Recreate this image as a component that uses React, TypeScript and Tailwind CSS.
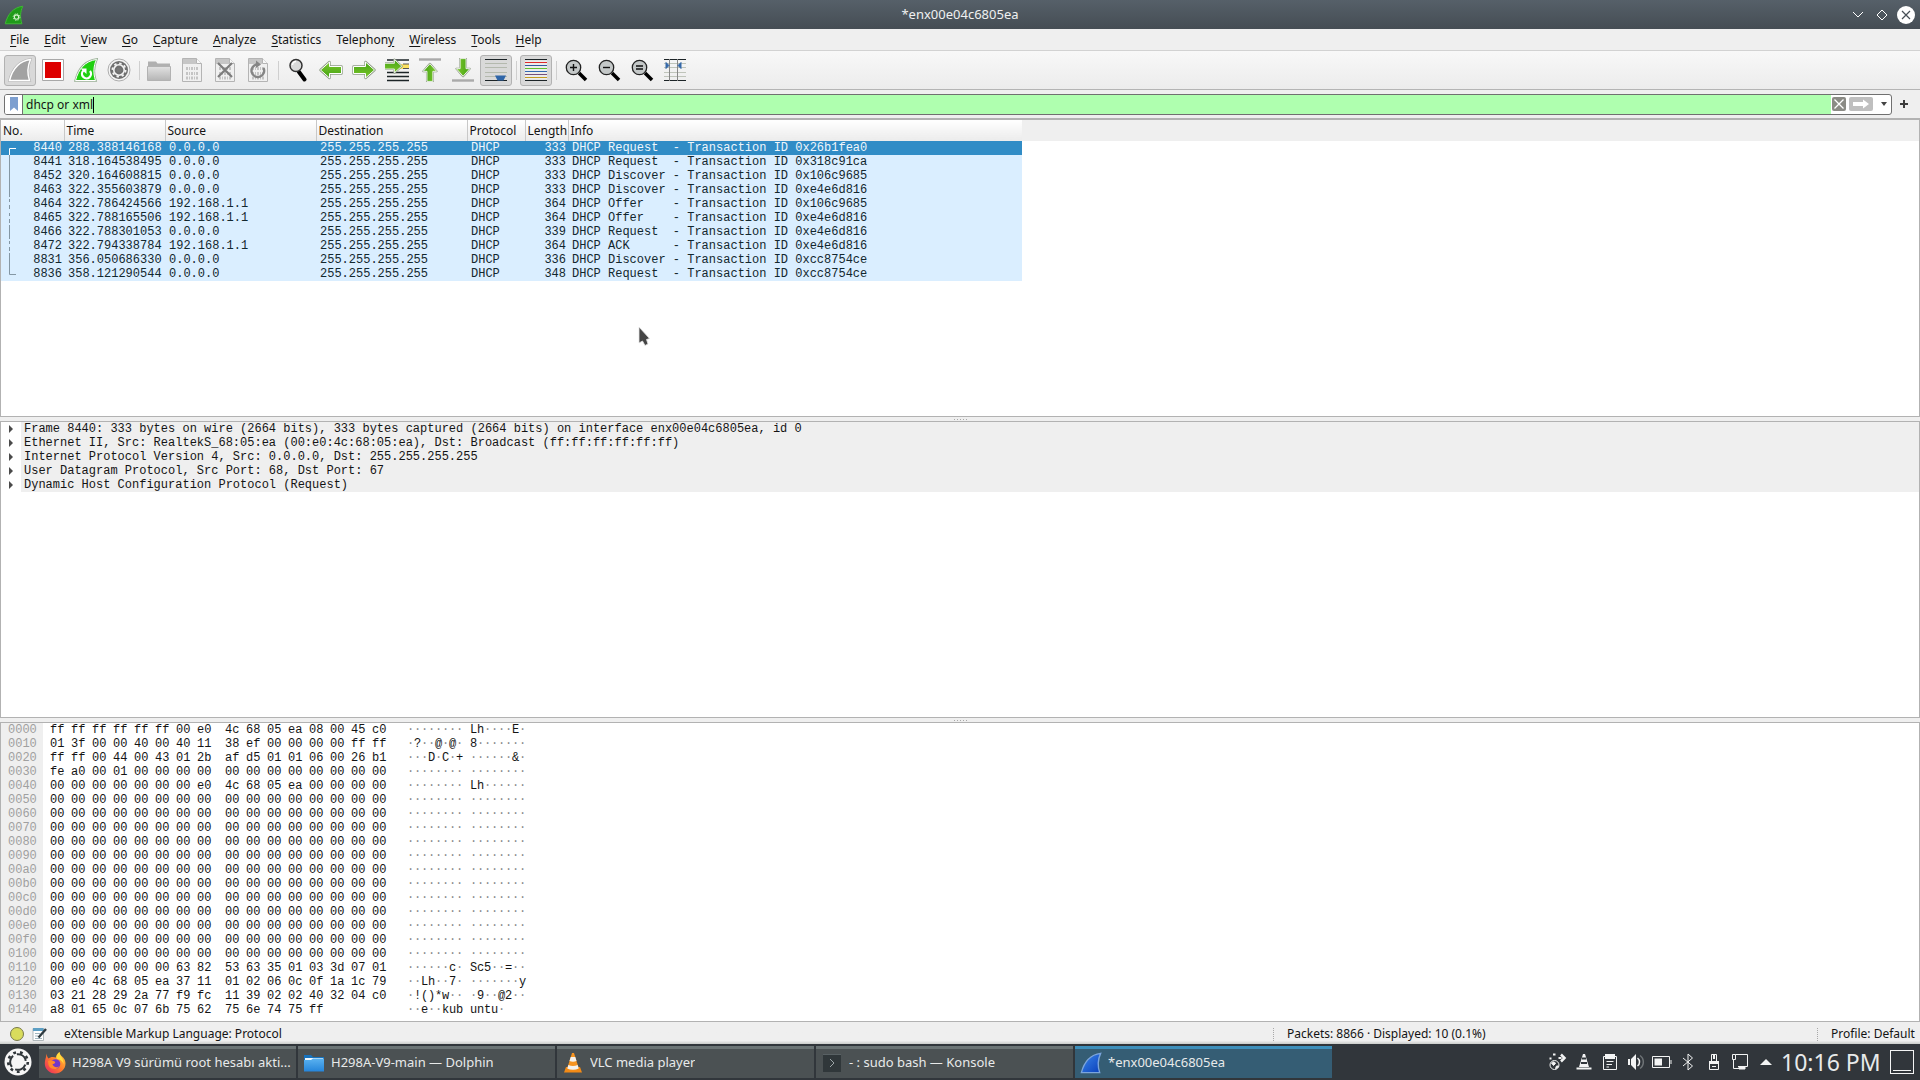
import { useState, type ReactNode } from "react";

const MENUS = ["File", "Edit", "View", "Go", "Capture", "Analyze", "Statistics", "Telephony", "Wireless", "Tools", "Help"];
// menus whose mnemonic is not the first letter
const MNEMONICS: Record<string, number> = { Telephony: 8 };

type Trace = "start" | "line" | "dash" | "end";
type Packet = { no: number; time: string; src: string; proto: string; len: number; info: string; trace: Trace };

const PACKETS: Packet[] = [
  { no: 8440, time: "288.388146168", src: "0.0.0.0", proto: "DHCP", len: 333, info: "DHCP Request  - Transaction ID 0x26b1fea0", trace: "start" },
  { no: 8441, time: "318.164538495", src: "0.0.0.0", proto: "DHCP", len: 333, info: "DHCP Request  - Transaction ID 0x318c91ca", trace: "line" },
  { no: 8452, time: "320.164608815", src: "0.0.0.0", proto: "DHCP", len: 333, info: "DHCP Discover - Transaction ID 0x106c9685", trace: "line" },
  { no: 8463, time: "322.355603879", src: "0.0.0.0", proto: "DHCP", len: 333, info: "DHCP Discover - Transaction ID 0xe4e6d816", trace: "line" },
  { no: 8464, time: "322.786424566", src: "192.168.1.1", proto: "DHCP", len: 364, info: "DHCP Offer    - Transaction ID 0x106c9685", trace: "dash" },
  { no: 8465, time: "322.788165506", src: "192.168.1.1", proto: "DHCP", len: 364, info: "DHCP Offer    - Transaction ID 0xe4e6d816", trace: "dash" },
  { no: 8466, time: "322.788301053", src: "0.0.0.0", proto: "DHCP", len: 339, info: "DHCP Request  - Transaction ID 0xe4e6d816", trace: "line" },
  { no: 8472, time: "322.794338784", src: "192.168.1.1", proto: "DHCP", len: 364, info: "DHCP ACK      - Transaction ID 0xe4e6d816", trace: "dash" },
  { no: 8831, time: "356.050686330", src: "0.0.0.0", proto: "DHCP", len: 336, info: "DHCP Discover - Transaction ID 0xcc8754ce", trace: "line" },
  { no: 8836, time: "358.121290544", src: "0.0.0.0", proto: "DHCP", len: 348, info: "DHCP Request  - Transaction ID 0xcc8754ce", trace: "end" },
];

const DETAILS = [
  "Frame 8440: 333 bytes on wire (2664 bits), 333 bytes captured (2664 bits) on interface enx00e04c6805ea, id 0",
  "Ethernet II, Src: RealtekS_68:05:ea (00:e0:4c:68:05:ea), Dst: Broadcast (ff:ff:ff:ff:ff:ff)",
  "Internet Protocol Version 4, Src: 0.0.0.0, Dst: 255.255.255.255",
  "User Datagram Protocol, Src Port: 68, Dst Port: 67",
  "Dynamic Host Configuration Protocol (Request)",
];

const ZERO_ROW = "00 00 00 00 00 00 00 00 00 00 00 00 00 00 00 00";
const HEX_ROWS: string[] = [
  "ff ff ff ff ff ff 00 e0 4c 68 05 ea 08 00 45 c0",
  "01 3f 00 00 40 00 40 11 38 ef 00 00 00 00 ff ff",
  "ff ff 00 44 00 43 01 2b af d5 01 01 06 00 26 b1",
  "fe a0 00 01 00 00 00 00 00 00 00 00 00 00 00 00",
  "00 00 00 00 00 00 00 e0 4c 68 05 ea 00 00 00 00",
  ...Array<string>(12).fill(ZERO_ROW),
  "00 00 00 00 00 00 63 82 53 63 35 01 03 3d 07 01",
  "00 e0 4c 68 05 ea 37 11 01 02 06 0c 0f 1a 1c 79",
  "03 21 28 29 2a 77 f9 fc 11 39 02 02 40 32 04 c0",
  "a8 01 65 0c 07 6b 75 62 75 6e 74 75 ff",
];

function Ascii({ bytes }: { bytes: string[] }) {
  return (
    <>
      {bytes.map((b, i) => {
        const code = parseInt(b, 16);
        const printable = code >= 0x20 && code < 0x7f;
        return (
          <span key={i} className={printable ? "inline-block w-[7px]" : "inline-block w-[7px] text-[#8c8c8c]"}>
            {printable ? String.fromCharCode(code) : "·"}
          </span>
        );
      })}
    </>
  );
}

function HexDump() {
  return (
    <div className="relative flex-1 overflow-hidden bg-white">
      <div className="absolute inset-y-0 left-0 w-[42px] bg-[#efefef]" />
      <table className="relative table-fixed border-collapse font-['Liberation_Mono',monospace] text-[12px] leading-[14px] text-[#141414]">
        <tbody>
          {HEX_ROWS.map((row, r) => {
            const bytes = row.split(" ");
            return (
              <tr key={r} className="h-[14px]">
                <td className="w-[49px] p-0 pl-[7px] text-[#a0a0a0]">{(r * 16).toString(16).padStart(4, "0")}</td>
                {Array.from({ length: 16 }, (_, i) => (
                  <td key={i} className={i === 7 ? "w-7 min-w-7 p-0" : "w-[21px] min-w-[21px] p-0"}>
                    {bytes[i] ?? ""}
                  </td>
                ))}
                <td className="w-[77px] p-0 pl-[14px] whitespace-pre">
                  <Ascii bytes={bytes.slice(0, 8)} />
                </td>
                <td className="w-14 p-0 whitespace-pre">
                  <Ascii bytes={bytes.slice(8)} />
                </td>
              </tr>
            );
          })}
        </tbody>
      </table>
    </div>
  );
}

const TRACE_PATHS: Record<Trace, string> = {
  start: "M15 7.5H8.5V14",
  line: "M8.5 0V14",
  dash: "M8.5 2V5M8.5 8V12",
  end: "M8.5 0V7.5H15",
};

function PacketList() {
  const [selected, setSelected] = useState(8440);
  const cell = "p-0 pl-1";
  const head = "border-r border-[#c8c8c8] bg-linear-to-b from-white to-[#ebebeb] p-0 pl-0.5 text-left font-normal";
  return (
    <div className="flex-1 overflow-hidden bg-white">
      <table className="w-full table-fixed border-collapse">
        <colgroup>
          <col className="w-[63px]" />
          <col className="w-[101px]" />
          <col className="w-[151px]" />
          <col className="w-[151px]" />
          <col className="w-[58px]" />
          <col className="w-[43px]" />
          <col className="w-[454px]" />
          <col />
        </colgroup>
        <thead>
          <tr className="h-[21px] text-[12px] leading-[18px] text-[#141414]">
            <th className={head}>No.</th>
            <th className={head}>Time</th>
            <th className={head}>Source</th>
            <th className={head}>Destination</th>
            <th className={head}>Protocol</th>
            <th className={head}>Length</th>
            <th className="bg-linear-to-b from-white to-[#ebebeb] p-0 pl-0.5 text-left font-normal">Info</th>
            <td className="bg-[#efefef] p-0" />
          </tr>
        </thead>
        <tbody className="font-['Liberation_Mono',monospace] text-[12px] leading-[14px] whitespace-pre">
          {PACKETS.map((p) => {
            const active = p.no === selected;
            return (
              <tr
                key={p.no}
                onClick={() => setSelected(p.no)}
                className={active ? "h-[14px] bg-[#308cc6] text-[#eff6fb]" : "h-[14px] bg-[#daeeff] text-[#12272e]"}
              >
                <td className="p-0 pr-0.5">
                  <div className="flex h-[14px] justify-between">
                    <svg width="16" height="14" className={active ? "text-white" : "text-[#8497a4]"}>
                      <path d={TRACE_PATHS[p.trace]} fill="none" stroke="currentColor" />
                    </svg>
                    <span>{p.no}</span>
                  </div>
                </td>
                <td className={cell}>{p.time}</td>
                <td className={cell}>{p.src}</td>
                <td className={cell}>255.255.255.255</td>
                <td className={cell}>{p.proto}</td>
                <td className="p-0 pr-0.5 text-right">{p.len}</td>
                <td className={cell}>{p.info}</td>
                <td className="bg-white p-0" />
              </tr>
            );
          })}
        </tbody>
      </table>
    </div>
  );
}

function PacketDetails() {
  return (
    <ul className="flex-1 overflow-hidden bg-white font-['Liberation_Mono',monospace] text-[12px] leading-[14px] whitespace-pre text-[#141414]">
      {DETAILS.map((line) => (
        <li key={line}>
          <button className="flex h-[14px] w-full items-center text-left">
            <span className="flex w-[20px] shrink-0 justify-center">
              <svg width="4" height="8" viewBox="0 0 4 8">
                <path d="M0 0 4 4 0 8Z" fill="#4a4a4a" />
              </svg>
            </span>
            <span className="h-[14px] flex-1 bg-[#efefef] pl-[3px]">{line}</span>
          </button>
        </li>
      ))}
    </ul>
  );
}

/* ---------- toolbar icons, 24x24 ---------- */

function Icon({ children }: { children: ReactNode }) {
  return (
    <svg width="24" height="24" viewBox="0 0 24 24" fill="none">
      {children}
    </svg>
  );
}

const FIN = "M1.5 22.5C4.5 11 11 3 22.5 1.5C19.5 8 19 15 21.5 22.5Z";

function PageBase() {
  return (
    <>
      <path d="M2.5 .5H16.5L21.5 5.5V23.5H2.5Z" fill="#f0f0f0" stroke="#b4b4b4" />
      <path d="M3 1H16V6H3Z" fill="#c6c6c6" />
      <path d="M16.5 .5V5.5H21.5" fill="#f8f8f8" stroke="#b4b4b4" />
      <path d="M6 10.5H19M6 15.5H19M6 20H19" stroke="#c4c4c4" strokeWidth="3" strokeDasharray="2 1 1 1" />
    </>
  );
}

const ARROW = "M1.5 12 10.5 4V8.5H22.5V15.5H10.5V20Z";

function GreenArrow({ turn }: { turn: string }) {
  return (
    <g transform={turn}>
      <path d={ARROW} fill="#5cb51c" stroke="#909c88" strokeWidth="2.4" strokeLinejoin="round" />
      <path d={ARROW} fill="url(#arrowFill)" stroke="#fff" strokeWidth="1" strokeLinejoin="round" />
    </g>
  );
}

function Magnifier({ sign }: { sign: string }) {
  return (
    <Icon>
      <path d="M15 15 22 22" stroke="#000" strokeWidth="3.6" />
      <circle cx="9.5" cy="9.5" r="7.2" fill="#c4c8c8" stroke="#222" strokeWidth="1.3" />
      <path d={sign} stroke="#111" strokeWidth="1.4" />
    </Icon>
  );
}

type Tool = { label: string; icon: ReactNode; on?: boolean };

const TOOLS: Tool[][] = [
  [
    {
      label: "Start capturing packets",
      on: true,
      icon: <Icon><path d={FIN} fill="#a2a2a2" stroke="#b4b4b4" strokeWidth="2.6" /><path d={FIN} fill="#a2a2a2" stroke="#fff" strokeWidth="1.4" /></Icon>,
    },
    {
      label: "Stop capturing packets",
      icon: <Icon><path d="M1.5 1.5H22.5V22.5H1.5Z" fill="#fff" stroke="#a8a8a8" /><path d="M4 4H20V20H4Z" fill="#dd0000" /></Icon>,
    },
    {
      label: "Restart current capture",
      icon: (
        <Icon>
          <path d={FIN} fill="#1cc80f" stroke="#9ab096" strokeWidth="2.4" />
          <path d={FIN} fill="#1fd010" stroke="#fff" />
          <path d="M9.5 12.5A4.5 4.5 0 1 0 16 13" stroke="#fff" strokeWidth="2.3" />
          <path d="M6.5 10.5H12.5V16Z" fill="#fff" />
        </Icon>
      ),
    },
    {
      label: "Capture options",
      icon: (
        <Icon>
          <circle cx="12" cy="12" r="11" fill="#f4f4f4" stroke="#adadad" />
          <circle cx="12" cy="12" r="9" fill="#6f6f6f" />
          <circle cx="12" cy="12" r="5.2" stroke="#f4f4f4" strokeWidth="1.6" />
          <circle cx="12" cy="12" r="6.6" stroke="#f4f4f4" strokeWidth="1.8" strokeDasharray="2.4 2.78" />
          <circle cx="12" cy="12" r="2.5" fill="#777" />
        </Icon>
      ),
    },
  ],
  [
    {
      label: "Open a capture file",
      icon: (
        <Icon>
          <path d="M1 3.5H9L10.5 5.5H23V9H1Z" fill="#b0b0b0" />
          <path d="M.5 8.5H23.5V22.5H.5Z" fill="url(#folderFill)" stroke="#b2b2b2" />
        </Icon>
      ),
    },
    { label: "Save this capture file", icon: <Icon><PageBase /></Icon> },
    { label: "Close this capture file", icon: <Icon><PageBase /><path d="M5 5 19 19M19 5 5 19" stroke="#7c7c7c" strokeWidth="2.2" /></Icon> },
    {
      label: "Reload this file",
      icon: (
        <Icon>
          <PageBase />
          <path d="M17.5 10A6.3 6.3 0 1 1 11 6.5" stroke="#858585" strokeWidth="2.4" />
          <path d="M10 2.5 15 6.5 10 10Z" fill="#858585" />
        </Icon>
      ),
    },
  ],
  [
    {
      label: "Find a packet",
      icon: (
        <Icon>
          <path d="M13 14 18.5 21.5" stroke="#000" strokeWidth="4" strokeLinecap="round" />
          <circle cx="10" cy="7.5" r="6" fill="#d9dada" stroke="#333" strokeWidth="1.5" />
          <path d="M6.5 7A3.5 3.5 0 0 1 10 3.5" stroke="#fff" strokeWidth="1.5" />
        </Icon>
      ),
    },
    { label: "Previous packet", icon: <Icon><GreenArrow turn="rotate(0 12 12)" /></Icon> },
    { label: "Next packet", icon: <Icon><GreenArrow turn="rotate(180 12 12)" /></Icon> },
    {
      label: "Go to specified packet",
      icon: (
        <Icon>
          <path d="M14 6H24V11H14Z" fill="#fce160" />
          <path d="M2 2H24M2 14.5H24M2 18.5H24M2 22.5H24" stroke="#1c2427" strokeWidth="1.6" />
          <path d="M18 6H24M18 10.5H24" stroke="#555" />
          <g transform="translate(-1 -3)"><GreenArrow turn="rotate(180 9.5 10.5) scale(.82)" /></g>
        </Icon>
      ),
    },
    { label: "First packet", icon: <Icon><path d="M1 1.5H23" stroke="#aaa" strokeWidth="2.4" /><GreenArrow turn="translate(2 4.5) rotate(90 10 10) scale(.84)" /></Icon> },
    { label: "Last packet", icon: <Icon><path d="M1 22.5H23" stroke="#aaa" strokeWidth="2.4" /><GreenArrow turn="translate(2 -.5) rotate(270 10 10) scale(.84)" /></Icon> },
    {
      label: "Auto scroll",
      on: true,
      icon: (
        <Icon>
          <path d="M1 1.5H23M1 22.5H23" stroke="#1c2427" />
          <path d="M1 5.5H23M1 9.5H23M1 14.5H23M1 18.5H23" stroke="#b4b9ae" />
          <path d="M11 17.5H22L19.5 22.5H13.5Z" fill="#2f65a8" />
        </Icon>
      ),
    },
  ],
  [
    {
      label: "Colorize packets",
      on: true,
      icon: (
        <Icon>
          <path d="M1 2.5H23V21.5H1Z" fill="#ececec" />
          <path d="M1 1.5H23M1 22.5H23" stroke="#1c2427" />
          <path d="M1 4.5H23" stroke="#df2b2b" />
          <path d="M1 7.5H23" stroke="#3358a0" />
          <path d="M1 10.5H23" stroke="#60c030" />
          <path d="M1 13.5H23" stroke="#3468b0" />
          <path d="M1 16.5H23" stroke="#75507b" />
          <path d="M1 19.5H23" stroke="#c49b20" />
        </Icon>
      ),
    },
  ],
  [
    { label: "Zoom in", icon: <Magnifier sign="M6 9.5H13M9.5 6V13" /> },
    { label: "Zoom out", icon: <Magnifier sign="M6 9.5H13" /> },
    { label: "Normal size", icon: <Magnifier sign="M6 8H13M6 11H13" /> },
    {
      label: "Resize columns",
      icon: (
        <Icon>
          <path d="M1 5.5H23M1 9.5H23M1 14.5H23M1 18.5H23" stroke="#bfc4ba" />
          <path d="M1 1.5H23M1 22.5H23" stroke="#1c2427" />
          <path d="M6.5 1V23M14.5 1V23" stroke="#888" />
          <path d="M3 4.5 6 7.5 3 10.5ZM18 4.5 15 7.5 18 10.5Z" fill="#3468a8" stroke="#3468a8" />
        </Icon>
      ),
    },
  ],
];

function Toolbar() {
  return (
    <div className="flex h-[39px] shrink-0 items-center gap-px border-b border-[#b4b4b4] bg-linear-to-b from-[#f8f8f8] to-[#ececec] pl-1">
      {TOOLS.map((group, g) => (
        <div key={g} className="flex items-center gap-px">
          {g > 0 && <span className="flex w-[6px] justify-center"><span className="h-[19px] w-px bg-[#cfcfcf]" /></span>}
          {group.map((t) => (
            <button
              key={t.label}
              aria-label={t.label}
              className={
                t.on
                  ? "flex h-[31px] w-8 items-center justify-center rounded-[3px] border border-[#b2b2b2] bg-[#d9d9d9]"
                  : "flex h-[31px] w-8 items-center justify-center"
              }
            >
              {t.icon}
            </button>
          ))}
        </div>
      ))}
    </div>
  );
}

function FilterBar() {
  const [filter, setFilter] = useState("dhcp or xml");
  return (
    <div className="flex h-[28px] shrink-0 items-center bg-[#efefef] pl-1">
      <div className="flex h-[21px] flex-1 overflow-hidden rounded-[3px] border border-[#707070] bg-white">
        <button aria-label="Bookmark this filter" className="flex w-[18px] items-center justify-center border-r border-[#707070] bg-white">
          <svg width="8" height="14" viewBox="0 0 8 14"><path d="M0 0H8V14L4 10.5 0 14Z" fill="#7d9fd0" /></svg>
        </button>
        <div className="relative flex flex-1 bg-[#afffaf]">
          <input
            aria-label="Display filter"
            value={filter}
            onChange={(e) => setFilter(e.target.value)}
            className="w-full bg-transparent pl-[3px] text-[12px] leading-[19px] text-[#141414] outline-none"
          />
          <span className="absolute top-0.5 left-[70px] h-4 w-px bg-black" />
        </div>
        <div className="flex items-center gap-[3px] pl-px">
          <button aria-label="Clear filter" className="flex h-[14px] w-[14px] items-center justify-center rounded-[2px] bg-[#8b8b85]">
            <svg width="10" height="10" viewBox="0 0 10 10"><path d="M.5 .5 9.5 9.5M9.5 .5 .5 9.5" stroke="#fff" strokeWidth="1.3" /></svg>
          </button>
          <button aria-label="Apply filter" className="flex h-[14px] w-6 items-center justify-center rounded-[2px] bg-[#bfbfbf]">
            <svg width="16" height="10" viewBox="0 0 16 10"><path d="M0 3H10V.5L16 5 10 9.5V7H0Z" fill="#fff" /></svg>
          </button>
          <button aria-label="Recent filters" className="flex w-[15px] items-center justify-center pl-px">
            <svg width="6" height="4" viewBox="0 0 6 4"><path d="M0 0H6L3 4Z" fill="#444" /></svg>
          </button>
        </div>
      </div>
      <button aria-label="Add filter button" className="flex w-[28px] items-center justify-center pr-1">
        <svg width="8" height="8" viewBox="0 0 8 8"><path d="M4 0V8M0 4H8" stroke="#3c3c3c" strokeWidth="2" /></svg>
      </button>
    </div>
  );
}

function Splitter() {
  return (
    <div className="flex items-center justify-center gap-0.5 bg-[#efefef]">
      {[0, 1, 2, 3, 4].map((i) => (
        <span key={i} className="h-px w-px bg-[#a8a8a8]" />
      ))}
    </div>
  );
}

function Grip() {
  return <span className="h-[13px] border-l border-dotted border-[#a8a8a8]" />;
}

/* ---------- task bar ---------- */

const TASKS = [
  {
    title: "H298A V9 sürümü root hesabı akti...",
    icon: (
      <svg width="22" height="22" viewBox="0 0 22 22">
        <path d="M2 5C1 8 .5 11 1 13.5C2 18 6.5 21.5 11 21.5C17 21.5 21.5 17 21.5 11.5C21.5 7 19 5.5 17.5 4C16.5 3 15.5 1.5 15.5 0C13.5 1.5 12 3.5 12 5.5C9 4.5 6 5 4.5 6.5C3.5 5.5 2.5 3 2.5 1.5Z" fill="url(#fireFill)" />
        <circle cx="11.5" cy="12" r="4.8" fill="#7238c8" />
        <path d="M4 9C7 7.5 9 9 10.5 9.5C12 10 11 12 8.5 12C9 15 13 16.5 15.5 14C13.5 18.5 6 18 4.5 13Z" fill="#ff8a2c" />
        <path d="M15.5 0C15.5 4 20 6 19.5 12C18.5 9 16 7.5 13 7C11.5 4.5 13.5 1.5 15.5 0Z" fill="#ffdc3e" />
      </svg>
    ),
  },
  {
    title: "H298A-V9-main — Dolphin",
    icon: (
      <svg width="22" height="22" viewBox="0 0 22 22">
        <path d="M1 3H8L10 5H21V10H1Z" fill="#1772bd" />
        <path d="M2 6H20V9H2Z" fill="#eef6fc" />
        <path d="M1 8H8L10 6.5H21V19.5H1Z" fill="url(#blueFill)" />
      </svg>
    ),
  },
  {
    title: "VLC media player",
    icon: (
      <svg width="22" height="22" viewBox="0 0 22 22">
        <path d="M4 15H18L20 20.5H2Z" fill="#f28a16" />
        <path d="M10 1H12L17 17Q11 20 5 17Z" fill="#f79420" />
        <path d="M8.7 5H13.3L14.5 9Q11 10.5 7.5 9ZM6.3 13Q11 15 15.7 13L16.7 16.5Q11 19 5.3 16.5Z" fill="#f4f2ef" />
      </svg>
    ),
  },
  {
    title: "- : sudo bash — Konsole",
    icon: (
      <svg width="22" height="22" viewBox="0 0 22 22">
        <path d="M2 2H20V20H2Z" fill="#30373a" />
        <path d="M2 2H20V3H2Z" fill="#596164" />
        <path d="M9 7 13 11 9 15" fill="none" stroke="#9da6a8" />
      </svg>
    ),
  },
  {
    title: "*enx00e04c6805ea",
    active: true,
    icon: (
      <svg width="22" height="22" viewBox="0 0 24 24">
        <path d={FIN} fill="url(#finBlue)" stroke="#7ba5dc" strokeWidth="1.5" />
      </svg>
    ),
  },
];

function TrayIcon({ label, children }: { label: string; children: ReactNode }) {
  return (
    <button aria-label={label} className="flex w-[26px] justify-center">
      <svg width="20" height="18" viewBox="0 0 20 18" fill="none" stroke="#f3f4f4">
        {children}
      </svg>
    </button>
  );
}

function Taskbar() {
  return (
    <footer className="flex h-9 shrink-0 items-center bg-[#31363b] text-[#e8eaea]">
      <button aria-label="Application launcher" className="flex w-[39px] justify-center pr-1">
        <svg width="28" height="28" viewBox="0 0 28 28">
          <circle cx="14" cy="14" r="13.5" fill="#f6f6f6" />
          <circle cx="14" cy="14" r="7.8" fill="none" stroke="#30363a" strokeWidth="2" strokeDasharray="12.3 4.03" transform="rotate(20 14 14)" />
          <circle cx="14" cy="14" r="9.8" fill="none" stroke="#30363a" strokeWidth="2.6" strokeDasharray="2.8 4.042" />
        </svg>
      </button>
      <nav className="flex h-8 min-w-0 flex-1 gap-0.5">
        {TASKS.map((t) => (
          <button
            key={t.title}
            className={
              t.active
                ? "flex w-[257px] items-center gap-1.5 border-t-[3px] border-[#3d8fbb] bg-[#355d74] px-[5px] pb-px text-left text-[13px]"
                : "flex w-[257px] items-center gap-1.5 border-t-[3px] border-[#6b7475] bg-[#4b5153] px-[5px] pb-px text-left text-[13px]"
            }
          >
            <span className="shrink-0">{t.icon}</span>
            <span className="truncate">{t.title}</span>
          </button>
        ))}
      </nav>
      <div className="flex items-center">
        <TrayIcon label="Updates">
          <circle cx="6.5" cy="12" r="4.5" />
          <path d="M3.5 10C4.5 8.5 7 8.5 7.5 10.5L5.5 12.5ZM8.5 13H10.5C10 15 8.5 15.5 7.5 15.5Z" fill="#f3f4f4" />
          <path d="M1.5 5.5H3.5M5 1.5H7.5M10.5 5H13.5" strokeWidth="2" />
          <path d="M13 1.5 16.5 5 13 8.5" strokeWidth="2.5" />
        </TrayIcon>
        <TrayIcon label="VLC">
          <path d="M9 1H11L15 14H5Z" fill="#f3f4f4" stroke="none" />
          <path d="M8 5.5H12M7 10H13" stroke="#31363b" strokeWidth="2" />
          <path d="M2.5 15.5H17.5" strokeWidth="2" />
        </TrayIcon>
        <TrayIcon label="Clipboard">
          <path d="M3.5 3.5H16.5V16.5H3.5ZM6.5 8.5H13.5M6.5 11.5H12M6.5 14H9" />
          <path d="M5 1H15V6H5Z" fill="#f3f4f4" stroke="none" />
        </TrayIcon>
        <TrayIcon label="Volume">
          <path d="M2 6H4V12H2ZM5 6 10 1V17L5 12Z" fill="#f3f4f4" stroke="none" />
          <path d="M11.5 5A5 5 0 0 1 11.5 13" strokeWidth="1.5" />
          <path d="M14 2.5A8 8 0 0 1 14 15.5" stroke="#6e7376" strokeWidth="1.5" />
        </TrayIcon>
        <TrayIcon label="Battery">
          <path d="M.5 3.5H17.5V14.5H.5ZM19 7V11" />
          <path d="M2.5 5.5H10V12.5H2.5Z" fill="#f3f4f4" stroke="none" />
        </TrayIcon>
        <TrayIcon label="Bluetooth"><path d="M5 5 14.5 13 10 17V1L14.5 5 5 13" /></TrayIcon>
        <TrayIcon label="Removable devices">
          <path d="M5.5 8.5H14.5V16.5H5.5ZM7.5 8V1.5H12.5V8" />
          <path d="M5 8H15V11H5ZM9 2H11V6H9Z" fill="#f3f4f4" stroke="none" />
          <path d="M8 13.5H12" />
        </TrayIcon>
        <TrayIcon label="Network">
          <path d="M5.5 1.5H17.5V13.5H8M2.5 1.5H5.5V6.5H2.5ZM3.5 6.5V15.5H9" />
          <path d="M9 14H15V16H9Z" fill="#f3f4f4" />
        </TrayIcon>
        <TrayIcon label="Show hidden icons"><path d="M4 12 10 6 16 12Z" fill="#f3f4f4" stroke="none" /></TrayIcon>
        <time className="w-[111px] pl-0.5 text-[23px] leading-8 whitespace-nowrap">10:16 PM</time>
        <button aria-label="Show desktop" className="mr-1.5 flex h-6 w-6 items-end justify-center border border-[#f3f4f4] pb-0.5">
          <span className="h-px w-[18px] bg-[#f3f4f4]" />
        </button>
      </div>
    </footer>
  );
}

export default function App() {
  return (
    <div className="relative flex h-screen flex-col overflow-hidden bg-[#efefef] font-['Noto_Sans',sans-serif] text-[12px] text-[#141414]">
      {/* shared gradients */}
      <svg width="0" height="0" className="absolute">
        <defs>
          <linearGradient id="arrowFill" x1="0" y1="0" x2="0" y2="1"><stop stopColor="#7cc72c" /><stop offset="1" stopColor="#45a314" /></linearGradient>
          <linearGradient id="folderFill" x1="0" y1="0" x2="0" y2="1"><stop stopColor="#e2e2e2" /><stop offset="1" stopColor="#b5b5b5" /></linearGradient>
          <linearGradient id="blueFill" x1="0" y1="0" x2="0" y2="1"><stop stopColor="#5bb2f0" /><stop offset="1" stopColor="#2585da" /></linearGradient>
          <linearGradient id="finBlue" x1="0" y1="0" x2="1" y2="1"><stop stopColor="#3c88ea" /><stop offset="1" stopColor="#0a3fba" /></linearGradient>
          <linearGradient id="fireFill" x1="1" y1="0" x2="0" y2="1"><stop stopColor="#ffd63a" /><stop offset=".5" stopColor="#ff7a2c" /><stop offset="1" stopColor="#e8206a" /></linearGradient>
        </defs>
      </svg>

      {/* title bar */}
      <header className="grid h-[29px] shrink-0 grid-cols-[1fr_auto_1fr] items-center bg-linear-to-b from-[#566069] to-[#454d54] text-[#eff0f1]">
        <svg width="20" height="20" viewBox="0 0 24 24" className="ml-1">
          <path d={FIN} fill="#1f9a1a" stroke="#3fb835" strokeWidth="1.2" />
          <circle cx="15" cy="14.5" r="2.6" fill="none" stroke="#d8f5d0" strokeWidth="1.4" />
          <circle cx="15" cy="14.5" r="4" fill="none" stroke="#d8f5d0" strokeDasharray="1.6 1.54" />
        </svg>
        <h1 className="text-[13px]">*enx00e04c6805ea</h1>
        <div className="flex items-center justify-end pr-0.5">
          <button aria-label="Minimize" className="flex w-6 justify-center">
            <svg width="12" height="7" viewBox="0 0 12 7"><path d="M1 1 6 6 11 1" fill="none" stroke="#fff" /></svg>
          </button>
          <button aria-label="Maximize" className="flex w-6 justify-center">
            <svg width="12" height="12" viewBox="0 0 12 12"><path d="M6 1 11 6 6 11 1 6Z" fill="none" stroke="#fff" /></svg>
          </button>
          <button aria-label="Close" className="flex w-6 justify-center">
            <svg width="18" height="18" viewBox="0 0 18 18">
              <circle cx="9" cy="9" r="9" fill="#fff" />
              <path d="M5 5 13 13M13 5 5 13" stroke="#474f56" strokeWidth="1.2" />
            </svg>
          </button>
        </div>
      </header>

      <nav className="flex h-[22px] shrink-0 items-center border-b border-[#d2d2d2] pl-0.5">
        {MENUS.map((m) => {
          const k = MNEMONICS[m] ?? 0;
          return (
            <button key={m} className="pr-[7px] pl-2">
              {m.slice(0, k)}
              <span className="underline underline-offset-2">{m[k]}</span>
              {m.slice(k + 1)}
            </button>
          );
        })}
      </nav>
      <Toolbar />
      <FilterBar />

      <main className="grid min-h-0 flex-1 grid-rows-[299fr_4px_297fr_4px_300fr]">
        <section aria-label="Packet list" className="flex min-h-0 border border-t-2 border-[#b2b2b2]"><PacketList /></section>
        <Splitter />
        <section aria-label="Packet details" className="flex min-h-0 border border-[#b2b2b2]"><PacketDetails /></section>
        <Splitter />
        <section aria-label="Packet bytes" className="flex min-h-0 border border-[#b2b2b2]"><HexDump /></section>
      </main>

      {/* status bar */}
      <div className="flex h-[22px] shrink-0 items-center bg-linear-to-b from-[#efefef] from-85% to-[#c9ccc9] pt-0.5">
        <button aria-label="Expert information" className="ml-2.5 h-[14px] w-[14px] rounded-full border border-[#77784a] bg-[#d9dc5c]" />
        <button aria-label="Capture file properties" className="ml-2 w-4">
          <svg width="15" height="15" viewBox="0 0 15 15">
            <path d="M1 1.5H11.5V13.5H1Z" fill="#fff" stroke="#b0b8bb" />
            <path d="M1 1H11.5V4H1Z" fill="#5d9fc4" />
            <path d="M3 6.5H8M3 9H6M3 11.5H10" stroke="#9fb4bd" />
            <path d="M14 2 6.5 10.5" stroke="#2e3a40" strokeWidth="2.4" />
          </svg>
        </button>
        <span className="ml-4 flex-1">eXtensible Markup Language: Protocol</span>
        <Grip />
        <span className="w-[543px] pl-[13px]">Packets: 8866 · Displayed: 10 (0.1%)</span>
        <Grip />
        <span className="w-[102px] pl-[13px] whitespace-nowrap">Profile: Default</span>
      </div>

      <Taskbar />

      {/* mouse pointer */}
      <svg width="14" height="22" viewBox="0 0 14 22" className="pointer-events-none absolute top-[326px] left-[638px]">
        <path d="M1 1V17L4.5 15 7 19.5 10 18 8.5 13.5 11.5 12.5Z" fill="#454545" stroke="#e4e4e4" strokeWidth=".8" />
      </svg>
    </div>
  );
}
